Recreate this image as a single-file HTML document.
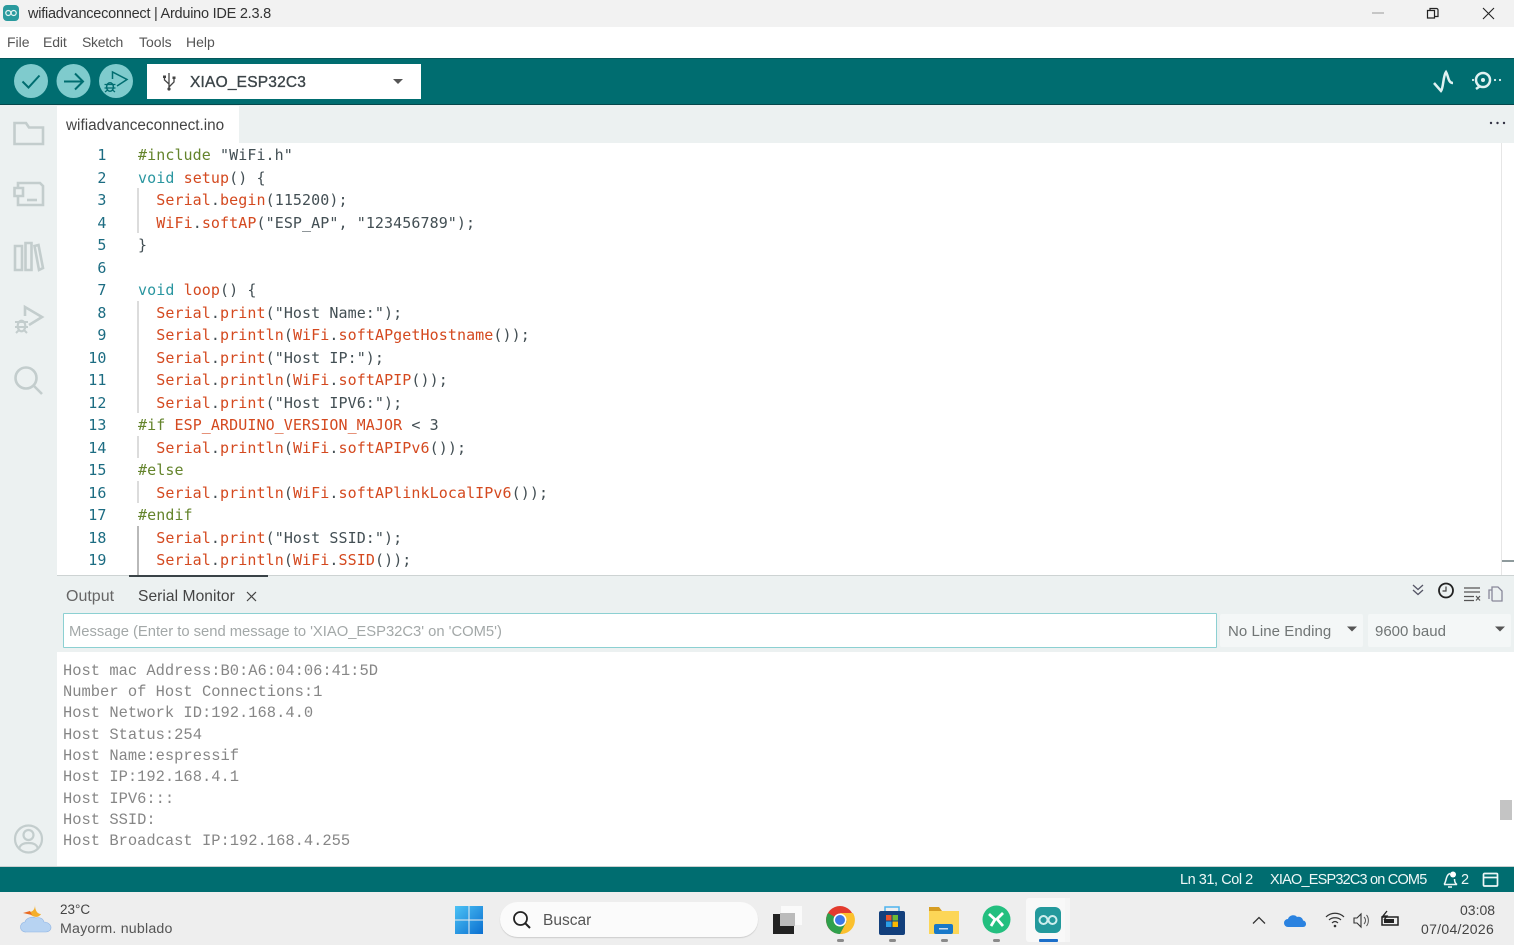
<!DOCTYPE html>
<html><head><meta charset="utf-8"><style>
html,body{margin:0;padding:0;width:1514px;height:945px;overflow:hidden;background:#fff}
body{position:relative;font-family:"Liberation Sans",sans-serif;color:#333}
.a{position:absolute;white-space:pre}
.r{position:absolute}
.ln{position:absolute;width:49.500px;left:57px;text-align:right;font:15px/22.5px "DejaVu Sans Mono",monospace;color:#1c6c82;letter-spacing:.08px;margin-top:1px}
.c{position:absolute;left:138px;font:15px/22.5px "DejaVu Sans Mono",monospace;letter-spacing:.08px;color:#434f54;white-space:pre;margin-top:1px}
.g{color:#64842c}.t{color:#2a96a0}.o{color:#d4491f}
.s{position:absolute;left:63px;font:15.45px/21.4px "Liberation Mono",monospace;color:#868686;white-space:pre}
svg{position:absolute;overflow:visible}
.m{top:34px;font-size:14px;line-height:17px;color:#555}
</style></head><body>
<!-- title bar -->
<div class="r" style="left:0;top:0;width:1514px;height:27px;background:#f2f2f2"></div>
<svg style="left:2px;top:4px" width="18" height="18" viewBox="0 0 18 18"><rect x="1" y="1" width="16" height="16" rx="4" fill="#2a9a9e"/><circle cx="6.3" cy="9" r="2.5" fill="none" stroke="#e6f4f4" stroke-width="1.2"/><circle cx="11.7" cy="9" r="2.5" fill="none" stroke="#e6f4f4" stroke-width="1.2"/></svg>
<div class="a" style="left:28px;top:5px;font-size:14.5px;line-height:18px;color:#333;letter-spacing:-.24px">wifiadvanceconnect | Arduino IDE 2.3.8</div>
<svg style="left:1370px;top:6px" width="130" height="16" viewBox="0 0 130 16"><path d="M2 7H14" stroke="#999" stroke-width="1"/><path d="M57.5 4.5h7v7.500h-7zM60 4.500V2.500h6.500a1.500 1.500 0 0 1 1.500 1.500v6.500h-3" fill="none" stroke="#222" stroke-width="1.200"/><path d="M113 2L124 13M124 2L113 13" stroke="#222" stroke-width="1.100"/></svg>
<!-- menu -->
<div class="a m" style="left:7px">File</div><div class="a m" style="left:43px;letter-spacing:-.1px">Edit</div><div class="a m" style="left:82px;letter-spacing:-.3px">Sketch</div><div class="a m" style="left:139px">Tools</div><div class="a m" style="left:186px">Help</div>
<!-- toolbar -->
<div class="r" style="left:0;top:57.500px;width:1514px;height:47.500px;background:#006d70;border-top:1px solid #04565a;border-bottom:1px solid #04474b;box-sizing:border-box"></div>
<svg style="left:14px;top:64px" width="120" height="34" viewBox="0 0 120 34">
<circle cx="17" cy="17" r="17" fill="#7fcbcd"/><path d="M8.500 17.500L14.500 23.500L25.500 11.500" fill="none" stroke="#006d70" stroke-width="2"/>
<circle cx="59.500" cy="17" r="17" fill="#7fcbcd"/><path d="M50 17.500H68M61 9.500L69 17.500L61 25.500" fill="none" stroke="#006d70" stroke-width="2"/>
<circle cx="102" cy="17" r="17" fill="#7fcbcd"/><path d="M98.500 15V8L113 15.500L103 22" fill="none" stroke="#006d70" stroke-width="1.500"/><ellipse cx="96" cy="23" rx="3.400" ry="4.300" fill="none" stroke="#006d70" stroke-width="1.500"/><path d="M90.500 20.500h11M90.500 24h11M91 28l2.500-2M101 28l-2.500-2" stroke="#006d70" stroke-width="1.200"/>
</svg>
<div class="r" style="left:147px;top:64px;width:274px;height:35px;background:#fff"></div>
<svg style="left:160px;top:72px" width="18" height="20" viewBox="0 0 18 20"><path d="M9 1V18M9 15L14 10V6.500M9 12L4.500 8V5.500" fill="none" stroke="#444" stroke-width="1.300"/><circle cx="9" cy="17" r="1.600" fill="#444"/><rect x="3" y="3.500" width="3" height="2.500" fill="#444"/><rect x="12.500" y="4.500" width="3" height="2.500" fill="#444"/></svg>
<div class="a" style="left:190px;top:73px;font-size:15.500px;line-height:20px;color:#3c4549;letter-spacing:.2px;-webkit-text-stroke:.35px #3c4549">XIAO_ESP32C3</div>
<svg style="left:392px;top:78px" width="12" height="8"><path d="M1 1H11L6 6Z" fill="#555"/></svg>
<svg style="left:1430px;top:68px" width="72" height="28" viewBox="0 0 72 28" fill="none" stroke="#dff1f1"><path d="M4 15L11 23C13.500 20 13 8 16 4C18.500 8 18 15 23 15" stroke-width="2.500"/><circle cx="53" cy="12" r="7" stroke-width="2.500"/><circle cx="53" cy="12" r="2" fill="#dff1f1" stroke="none"/><path d="M49.500 18.500L46 21" stroke-width="2.500"/><circle cx="43" cy="12" r="1.100" fill="#dff1f1" stroke="none"/><circle cx="65" cy="12" r="1.100" fill="#dff1f1" stroke="none"/><circle cx="70" cy="12" r="1.100" fill="#dff1f1" stroke="none"/></svg>
<!-- side -->
<div class="r" style="left:0;top:105px;width:57px;height:762px;background:#ecf1f1"></div>
<div class="r" style="left:57px;top:105px;width:1457px;height:38px;background:#ecf1f1"></div>
<div class="r" style="left:57px;top:106px;width:182px;height:37px;background:#fff"></div>
<div class="a" style="left:66px;top:116px;font-size:15.300px;line-height:18px;color:#444;letter-spacing:0;margin-top:.5px">wifiadvanceconnect.ino</div>
<svg style="left:1489px;top:120px" width="18" height="6"><circle cx="2" cy="3" r="1.200" fill="#334"/><circle cx="8.500" cy="3" r="1.200" fill="#334"/><circle cx="15" cy="3" r="1.200" fill="#334"/></svg>
<svg style="left:0;top:105px" width="57" height="300" viewBox="0 0 57 300" fill="none" stroke="#c3cdcd" stroke-width="2.600">
<path d="M14.500 39V18H26L29 22.500H43V39Z"/>
<path d="M18 83V78H40L43 81V100H18V91"/><path d="M14.500 83H23V91H14.500Z"/><path d="M27 95H37"/>
<path d="M15 141H22V165H15ZM25.500 138H31.500V165H25.500ZM34.500 141L38.500 140L43 163L39 165Z"/>
<path d="M25 211V202L42 212L29 220"/><ellipse cx="21.500" cy="221" rx="3.800" ry="5.300" stroke-width="2.200"/><path d="M15 217H28M15 222H28M16 228L19 225M27 228L24 225" stroke-width="2"/>
<circle cx="26" cy="273" r="10.500"/><path d="M34 281L42 289"/>
</svg>
<svg style="left:0;top:820px" width="57" height="40" viewBox="0 0 57 40" fill="none" stroke="#c3cdcd" stroke-width="2.200"><circle cx="28.500" cy="19" r="13.500"/><circle cx="28.500" cy="15" r="5"/><path d="M19 29C20 24 24 23 28.500 23C33 23 37 24 38 29"/></svg>
<!-- editor -->
<div class="r" style="left:137px;top:188px;width:1.500px;height:45px;background:#dcdcdc"></div>
<div class="r" style="left:137px;top:301px;width:1.500px;height:112px;background:#dcdcdc"></div>
<div class="r" style="left:137px;top:436px;width:1.500px;height:22px;background:#dcdcdc"></div>
<div class="r" style="left:137px;top:481px;width:1.500px;height:22px;background:#dcdcdc"></div>
<div class="r" style="left:137px;top:526px;width:1.500px;height:50px;background:#b9b9b9"></div>
<div class="ln" style="top:143px">1</div><div class="ln" style="top:165.500px">2</div><div class="ln" style="top:188px">3</div><div class="ln" style="top:210.500px">4</div><div class="ln" style="top:233px">5</div><div class="ln" style="top:255.500px">6</div><div class="ln" style="top:278px">7</div><div class="ln" style="top:300.500px">8</div><div class="ln" style="top:323px">9</div><div class="ln" style="top:345.500px">10</div><div class="ln" style="top:368px">11</div><div class="ln" style="top:390.500px">12</div><div class="ln" style="top:413px">13</div><div class="ln" style="top:435.500px">14</div><div class="ln" style="top:458px">15</div><div class="ln" style="top:480.500px">16</div><div class="ln" style="top:503px">17</div><div class="ln" style="top:525.500px">18</div><div class="ln" style="top:548px">19</div>
<div class="c" style="top:143px"><span class="g">#include</span> "WiFi.h"</div>
<div class="c" style="top:165.500px"><span class="t">void</span> <span class="o">setup</span>() {</div>
<div class="c" style="top:188px">  <span class="o">Serial</span>.<span class="o">begin</span>(115200);</div>
<div class="c" style="top:210.500px">  <span class="o">WiFi</span>.<span class="o">softAP</span>("ESP_AP", "123456789");</div>
<div class="c" style="top:233px">}</div>
<div class="c" style="top:278px"><span class="t">void</span> <span class="o">loop</span>() {</div>
<div class="c" style="top:300.500px">  <span class="o">Serial</span>.<span class="o">print</span>("Host Name:");</div>
<div class="c" style="top:323px">  <span class="o">Serial</span>.<span class="o">println</span>(<span class="o">WiFi</span>.<span class="o">softAPgetHostname</span>());</div>
<div class="c" style="top:345.500px">  <span class="o">Serial</span>.<span class="o">print</span>("Host IP:");</div>
<div class="c" style="top:368px">  <span class="o">Serial</span>.<span class="o">println</span>(<span class="o">WiFi</span>.<span class="o">softAPIP</span>());</div>
<div class="c" style="top:390.500px">  <span class="o">Serial</span>.<span class="o">print</span>("Host IPV6:");</div>
<div class="c" style="top:413px"><span class="g">#if</span> <span class="o">ESP_ARDUINO_VERSION_MAJOR</span> &lt; 3</div>
<div class="c" style="top:435.500px">  <span class="o">Serial</span>.<span class="o">println</span>(<span class="o">WiFi</span>.<span class="o">softAPIPv6</span>());</div>
<div class="c" style="top:458px"><span class="g">#else</span></div>
<div class="c" style="top:480.500px">  <span class="o">Serial</span>.<span class="o">println</span>(<span class="o">WiFi</span>.<span class="o">softAPlinkLocalIPv6</span>());</div>
<div class="c" style="top:503px"><span class="g">#endif</span></div>
<div class="c" style="top:525.500px">  <span class="o">Serial</span>.<span class="o">print</span>("Host SSID:");</div>
<div class="c" style="top:548px">  <span class="o">Serial</span>.<span class="o">println</span>(<span class="o">WiFi</span>.<span class="o">SSID</span>());</div>
<div class="r" style="left:1501px;top:143px;width:1px;height:433px;background:#e6e6e6"></div>
<div class="r" style="left:1502px;top:560px;width:12px;height:2px;background:#8e9a9c"></div>
<!-- panel -->
<div class="r" style="left:57px;top:575px;width:1457px;height:77px;background:#ecf1f1;border-top:1px solid #cdd3d3;box-sizing:border-box"></div>
<div class="r" style="left:129px;top:575px;width:139px;height:2px;background:#3a4347"></div>
<div class="a" style="left:66px;top:588px;font-size:16px;line-height:18px;color:#666">Output</div>
<div class="a" style="left:138px;top:588px;font-size:15.600px;line-height:18px;color:#444;letter-spacing:.05px">Serial Monitor</div>
<svg style="left:245px;top:590px" width="13" height="13"><path d="M2 2L11 11M11 2L2 11" stroke="#444" stroke-width="1.200"/></svg>
<svg style="left:1408px;top:580px" width="100" height="24" viewBox="0 0 100 24" fill="none"><path d="M5 5L10 9.500L15 5M5 10L10 14.500L15 10" stroke="#556" stroke-width="1.300"/><circle cx="38" cy="10.500" r="7" stroke="#222" stroke-width="1.800"/><path d="M38 6.500V11H34.500" stroke="#444" stroke-width="1.200"/><path d="M56 8H72M56 12H72M56 16.500H66M56 20.500H66M68 16L72 20.500M72 16L68 20.500" stroke="#555" stroke-width="1.200"/><path d="M84 7h6l4 4v10h-9a1 1 0 0 1-1-1zM84 10h-3v9" stroke="#889" stroke-width="1.300"/></svg>
<div class="r" style="left:63px;top:613px;width:1154px;height:35px;background:#fff;border:1px solid #8cd0d2;border-radius:1px;box-sizing:border-box"></div>
<div class="a" style="left:69px;top:623px;font-size:14.800px;line-height:18px;color:#a3a8a8;letter-spacing:-.02px">Message (Enter to send message to 'XIAO_ESP32C3' on 'COM5')</div>
<div class="r" style="left:1220px;top:614px;width:143px;height:33px;background:#f4f7f7;border-radius:2px"></div>
<div class="a" style="left:1228px;top:623px;font-size:15px;line-height:18px;color:#707575;letter-spacing:.05px">No Line Ending</div>
<svg style="left:1346px;top:626px" width="12" height="7"><path d="M1 .5H11L6 5.500Z" fill="#555"/></svg>
<div class="r" style="left:1368px;top:614px;width:143px;height:33px;background:#f4f7f7;border-radius:2px"></div>
<div class="a" style="left:1375px;top:623px;font-size:15px;line-height:18px;color:#707575">9600 baud</div>
<svg style="left:1494px;top:626px" width="12" height="7"><path d="M1 .5H11L6 5.500Z" fill="#555"/></svg>
<!-- serial -->
<div class="s" style="top:661px">Host mac Address:B0:A6:04:06:41:5D</div>
<div class="s" style="top:682px">Number of Host Connections:1</div>
<div class="s" style="top:703px">Host Network ID:192.168.4.0</div>
<div class="s" style="top:725px">Host Status:254</div>
<div class="s" style="top:746px">Host Name:espressif</div>
<div class="s" style="top:767px">Host IP:192.168.4.1</div>
<div class="s" style="top:789px">Host IPV6:::</div>
<div class="s" style="top:810px">Host SSID:</div>
<div class="s" style="top:831px">Host Broadcast IP:192.168.4.255</div>
<div class="r" style="left:1500px;top:800px;width:12px;height:20px;background:#c4c4c4"></div>
<!-- status -->
<div class="r" style="left:0;top:866px;width:1514px;height:26px;background:#006d70;border-top:1px solid #c9d0d0;box-sizing:border-box"></div>
<div class="a" style="left:1180px;top:872px;font-size:14.500px;line-height:17px;color:#eef7f7;letter-spacing:-.45px">Ln 31, Col 2</div>
<div class="a" style="left:1270px;top:872px;font-size:14.500px;line-height:17px;color:#eef7f7;letter-spacing:-.8px">XIAO_ESP32C3 on COM5</div>
<div class="a" style="left:1461px;top:872px;font-size:14.500px;line-height:17px;color:#eef7f7">2</div>
<svg style="left:1442px;top:871px" width="60" height="18" viewBox="0 0 60 18" fill="none" stroke="#eef7f7" stroke-width="1.500"><path d="M2 13.500C4.500 11 3.500 4 8 2.500M12.500 8C12.500 10 13 12.500 15 13.500H2M6 16H10"/><circle cx="11" cy="3.500" r="3" fill="#fff" stroke="none"/><rect x="41.500" y="2.500" width="14" height="12.500" rx="1" stroke-width="1.700"/><path d="M41.500 6.500H55.500" stroke-width="1.700"/></svg>
<!-- taskbar -->
<div class="r" style="left:0;top:892px;width:1514px;height:53px;background:#eeeeee"></div>
<svg style="left:20px;top:904px" width="34" height="30" viewBox="0 0 34 30"><path d="M15 1C15 5 13 8 9 8C11 13 18 15 21 10C17 10 15 6 15 1Z" fill="#f4ae2b"/><path d="M3 9L10 7L12 11Z" fill="#ea6a20"/><path d="M6 28a5 5 0 0 1-1-10c1-4 7-6 11-4c3-1 7 0 8 4c4 0 7 3 7 5.500c0 3-3 4.500-5 4.500Z" fill="#b7d3f2" stroke="#8fb4e3" stroke-width=".6"/></svg>
<div class="a" style="left:60px;top:902px;font-size:13.500px;line-height:16px;color:#444">23°C</div>
<div class="a" style="left:60px;top:921px;font-size:14.200px;line-height:16px;color:#555;letter-spacing:.2px">Mayorm. nublado</div>
<svg style="left:455px;top:906px" width="28" height="28" viewBox="0 0 28 28"><defs><linearGradient id="w" x1="0" y1="0" x2="1" y2="1"><stop offset="0" stop-color="#4cc2f5"/><stop offset="1" stop-color="#0b6fd0"/></linearGradient></defs><path d="M0 0H13.500V13.500H0ZM14.500 0H28V13.500H14.500ZM0 14.500H13.500V28H0ZM14.500 14.500H28V28H14.500Z" fill="url(#w)"/></svg>
<div class="r" style="left:500px;top:902px;width:258px;height:35px;background:#fbfbfb;border-radius:18px;box-shadow:0 1px 1px #ccc"></div>
<svg style="left:511px;top:909px" width="22" height="22"><circle cx="9.500" cy="9.500" r="6.500" fill="none" stroke="#222" stroke-width="1.800"/><path d="M14.500 14.500L19 19" stroke="#222" stroke-width="2"/></svg>
<div class="a" style="left:543px;top:912px;font-size:15.500px;line-height:18px;color:#555">Buscar</div>
<svg style="left:770px;top:904px" width="36" height="32" viewBox="0 0 36 32"><rect x="3" y="10" width="21" height="20" fill="#222"/><rect x="11" y="2" width="21" height="19" fill="#fafafa"/><rect x="10" y="9" width="15" height="13" fill="#bbb"/></svg>
<svg style="left:825px;top:905px" width="30" height="30" viewBox="0 0 30 30"><circle cx="15" cy="15" r="14" fill="#e33b2e"/><path d="M15 15L3 8A14 14 0 0 0 15 29L22 16Z" fill="#2fa04c"/><path d="M15 8H28A14 14 0 0 1 15 29L22 16Z" fill="#fbc02d"/><circle cx="15" cy="15" r="6.500" fill="#fff"/><circle cx="15" cy="15" r="5" fill="#3b78e7"/></svg>
<svg style="left:876px;top:904px" width="32" height="32" viewBox="0 0 32 32"><path d="M9 8V3H23V8" fill="none" stroke="#4db4ee" stroke-width="1.500"/><rect x="3" y="7" width="26" height="24" rx="2" fill="#123f7c"/><rect x="10" y="11" width="5.500" height="5.500" fill="#e8542d"/><rect x="16.500" y="11" width="5.500" height="5.500" fill="#6dbb35"/><rect x="10" y="17.500" width="5.500" height="5.500" fill="#2b9fe8"/><rect x="16.500" y="17.500" width="5.500" height="5.500" fill="#fcb900"/></svg>
<svg style="left:929px;top:905px" width="30" height="30" viewBox="0 0 30 30"><path d="M0 2H10L13 6H30V28H0Z" fill="#d69d22"/><rect y="6" width="30" height="23" fill="#fcd657"/><rect x="5" y="19" width="19" height="10" rx="2" fill="#1878c9"/><rect x="10" y="23" width="9" height="1.500" fill="#cde"/></svg>
<svg style="left:982px;top:905px" width="29" height="29" viewBox="0 0 29 29"><circle cx="14.500" cy="14.500" r="14" fill="#23bf7f"/><path d="M7 9L13 14.500L9 21M21 8L15 14L21 21" fill="none" stroke="#fff" stroke-width="2.800"/></svg>
<div class="r" style="left:1026px;top:898px;width:39px;height:44px;background:#f8f8f8;border-radius:3px 0 0 3px"></div>
<div class="r" style="left:1065px;top:898px;width:5px;height:44px;background:#f5f5f5"></div>
<svg style="left:1035px;top:907px" width="27" height="27" viewBox="0 0 27 27"><rect width="26" height="26" rx="6" fill="#23999c"/><circle cx="8.500" cy="13" r="4" fill="none" stroke="#cfeeee" stroke-width="2"/><circle cx="17.500" cy="13" r="4" fill="none" stroke="#cfeeee" stroke-width="2"/></svg>
<div class="r" style="left:1039px;top:939px;width:19px;height:3px;background:#1b6ec9;border-radius:1px"></div>
<div class="r" style="left:837px;top:939px;width:7px;height:3px;background:#8a8a8a;border-radius:2px"></div>
<div class="r" style="left:889px;top:939px;width:7px;height:3px;background:#8a8a8a;border-radius:2px"></div>
<div class="r" style="left:941px;top:939px;width:7px;height:3px;background:#8a8a8a;border-radius:2px"></div>
<div class="r" style="left:993px;top:939px;width:7px;height:3px;background:#8a8a8a;border-radius:2px"></div>
<svg style="left:1250px;top:908px" width="150" height="24" viewBox="0 0 150 24" fill="none"><path d="M3 15.500L9 9.500L15 15.500" stroke="#333" stroke-width="1.300"/><path d="M38 19a4 4 0 0 1 0-8c1-4 7-5 9-2c4-1 6 2 6 3.500c2 0 3 2 3 3.500s-1 3-3 3Z" fill="#2a82e0"/><path d="M76 9C81 4 89 4 94 9M79 12C82 9 88 9 91 12M82 15C84 13 86 13 88 15" stroke="#333" stroke-width="1.200"/><circle cx="85" cy="18" r="1.300" fill="#333"/><path d="M104 10H107L111 6V19L107 15H104Z" stroke="#333" stroke-width="1.100"/><path d="M114 9C116 11 116 14 114 16M116.500 7C119 10 119 15 116.500 18" stroke="#555" stroke-width="1"/><path d="M132 9H148V17H132Z" stroke="#222" stroke-width="1.500"/><rect x="134" y="11" width="10" height="4" fill="#222"/><path d="M137 3L133 8H137L134 12" stroke="#222" stroke-width="1.300"/></svg>
<div class="a" style="left:1460px;top:902px;font-size:14px;line-height:17px;color:#444">03:08</div>
<div class="a" style="left:1421px;top:921px;font-size:14px;line-height:17px;color:#444;letter-spacing:.3px">07/04/2026</div>
</body></html>
